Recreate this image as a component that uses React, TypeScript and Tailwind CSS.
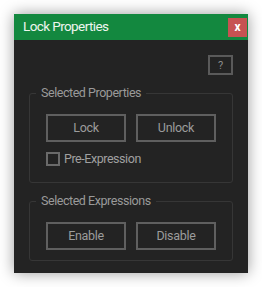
import { useState } from 'react';

const btn =
  'w-[80px] h-[28px] border-2 border-[#5f5f5f] bg-[#232323] text-[#9c9c9c] text-[12.5px] tracking-[-0.3px] leading-none hover:border-[#7a7a7a]';

export default function App() {
  const [preExpression, setPreExpression] = useState(false);

  return (
    <div className="w-[262px] h-[287px] bg-white pt-[14px] pl-[14px] font-['Roboto',sans-serif]">
      <div className="w-[234px] h-[259px] bg-[#232323] shadow-[0_0_14px_rgba(0,0,0,0.4)] flex flex-col">
        <div className="h-[26px] bg-[#13883f] flex items-center justify-between pl-[9px] pr-[1px]">
          <span className="text-[13.5px] tracking-[-0.6px] text-[#eef5ee] leading-none">Lock Properties</span>
          <button className="w-[19px] h-[19px] bg-[#c75252] text-white text-[12px] font-bold leading-none flex items-center justify-center">
            x
          </button>
        </div>

        <div className="flex flex-col px-[15px] pt-[15px] pb-[12px]">
          <div className="flex justify-end">
            <button className="w-[25px] h-[20px] border-2 border-[#5a5a5a] text-[#8c8c8c] text-[11px] leading-none flex items-center justify-center">
              ?
            </button>
          </div>

          <fieldset className="mt-[11px] border border-[#363636] rounded-[3px] px-[16px] pt-[14px] pb-[16px]">
            <legend className="-ml-[10px] px-[5px] text-[12.5px] tracking-[-0.45px] leading-[14px] text-[#9a9a9a]">
              Selected Properties
            </legend>
            <div className="flex gap-[10px]">
              <button className={btn}>Lock</button>
              <button className={btn}>Unlock</button>
            </div>
            <label className="mt-[10px] flex items-center gap-[4px] cursor-pointer">
              <span
                onClick={() => setPreExpression(!preExpression)}
                className="w-[14px] h-[14px] border-2 border-[#6a6a6a] flex items-center justify-center text-[10px] text-[#bdbdbd] leading-none"
              >
                {preExpression ? '✓' : ''}
              </span>
              <span className="text-[12.5px] tracking-[-0.45px] leading-[14px] text-[#a0a0a0]">Pre-Expression</span>
            </label>
          </fieldset>

          <fieldset className="mt-[11px] border border-[#363636] rounded-[3px] px-[16px] pt-[14px] pb-[10px]">
            <legend className="-ml-[10px] px-[5px] text-[12.5px] tracking-[-0.45px] leading-[14px] text-[#9a9a9a]">
              Selected Expressions
            </legend>
            <div className="flex gap-[10px]">
              <button className={btn}>Enable</button>
              <button className={btn}>Disable</button>
            </div>
          </fieldset>
        </div>
      </div>
    </div>
  );
}
